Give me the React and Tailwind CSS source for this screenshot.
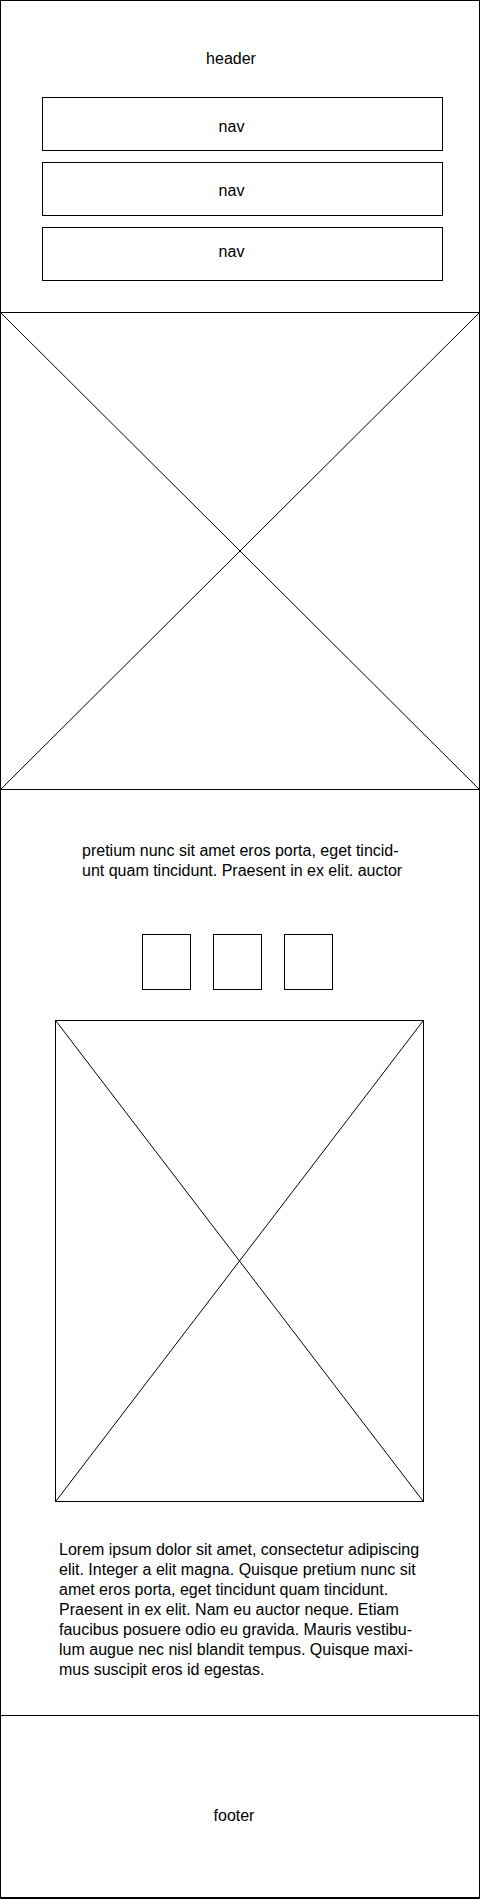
import React from "react";

function XBox({ className }) {
  return (
    <div className={className}>
      <svg className="block w-full h-full" viewBox="0 0 100 100" preserveAspectRatio="none">
        <line x1="0" y1="0" x2="100" y2="100" stroke="#000" strokeWidth="1" vectorEffect="non-scaling-stroke" />
        <line x1="100" y1="0" x2="0" y2="100" stroke="#000" strokeWidth="1" vectorEffect="non-scaling-stroke" />
      </svg>
    </div>
  );
}

const pretium = [
  "pretium nunc sit amet eros porta, eget tincid-",
  "unt quam tincidunt. Praesent in ex elit. auctor",
];

const lorem = [
  "Lorem ipsum dolor sit amet, consectetur adipiscing",
  "elit. Integer a elit magna. Quisque pretium nunc sit",
  "amet eros porta, eget tincidunt quam tincidunt.",
  "Praesent in ex elit. Nam eu auctor neque. Etiam",
  "faucibus posuere odio eu gravida. Mauris vestibu-",
  "lum augue nec nisl blandit tempus. Quisque maxi-",
  "mus suscipit eros id egestas.",
];

const navs = [
  { t: "nav", c: "pt-[6px]" },
  { t: "nav", c: "pt-[4px]" },
  { t: "nav", c: "pb-[4px]" },
];

export default function App() {
  return (
    <div className="w-[480px] h-[1899px] bg-white text-black border border-black border-b-2 flex flex-col font-['Liberation_Sans',Arial,sans-serif] text-[16px] leading-[20px]">
      <header className="border-b border-black pt-[48px] pb-[31px] flex flex-col">
        <div className="text-center pr-[18px]">header</div>
        <nav className="mt-[28px] ml-[41px] w-[401px] flex flex-col gap-[11px]">
          {navs.map((n, i) => (
            <div key={i} className={"h-[54px] border border-black flex items-center justify-center pr-[22px] " + n.c}>
              {n.t}
            </div>
          ))}
        </nav>
      </header>

      <XBox className="h-[477px] border-b border-black" />

      <main className="border-b border-black pt-[51px] pb-[35px] flex flex-col">
        <p className="ml-[81px]">
          {pretium.map((l, i) => (
            <span key={i} className="block whitespace-nowrap">{l}</span>
          ))}
        </p>
        <div className="mt-[53px] ml-[141px] flex gap-[22px]">
          <div className="w-[49px] h-[56px] border border-black" />
          <div className="w-[49px] h-[56px] border border-black" />
          <div className="w-[49px] h-[56px] border border-black" />
        </div>
        <XBox className="mt-[30px] ml-[54px] w-[369px] h-[482px] border border-black" />
        <p className="mt-[38px] ml-[58px]">
          {lorem.map((l, i) => (
            <span key={i} className="block whitespace-nowrap">{l}</span>
          ))}
        </p>
      </main>

      <footer className="flex-1 pt-[90px] text-center pr-[12px]">footer</footer>
    </div>
  );
}
